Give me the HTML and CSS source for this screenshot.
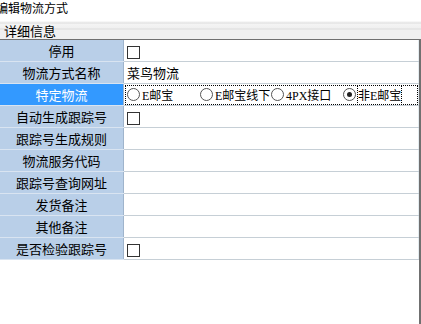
FILE: index.html
```html
<!DOCTYPE html>
<html lang="zh-CN">
<head>
<meta charset="UTF-8" />
<title>编辑物流方式</title>
<link rel="stylesheet" href="styles.css">
</head>
<body>
<div class="window">
  <div class="title">编辑物流方式</div>
  <div class="group-head">详细信息</div>
  <div class="panel">
    <table class="props">
      <tr><td class="label">停用</td><td class="value"><span class="check"></span></td></tr>
      <tr><td class="label">物流方式名称</td><td class="value">菜鸟物流</td></tr>
      <tr class="selected">
        <td class="label">特定物流</td>
        <td class="value">
          <div class="radios">
            <span class="radio-item w1"><span class="radio"></span>E邮宝</span>
            <span class="radio-item w2"><span class="radio"></span>E邮宝线下</span>
            <span class="radio-item w3"><span class="radio"></span>4PX接口</span>
            <span class="radio-item"><span class="radio on"></span><span class="focus">非E邮宝</span></span>
          </div>
        </td>
      </tr>
      <tr><td class="label">自动生成跟踪号</td><td class="value"><span class="check"></span></td></tr>
      <tr><td class="label">跟踪号生成规则</td><td class="value"></td></tr>
      <tr><td class="label">物流服务代码</td><td class="value"></td></tr>
      <tr><td class="label">跟踪号查询网址</td><td class="value"></td></tr>
      <tr><td class="label">发货备注</td><td class="value"></td></tr>
      <tr><td class="label">其他备注</td><td class="value"></td></tr>
      <tr><td class="label">是否检验跟踪号</td><td class="value"><span class="check"></span></td></tr>
    </table>
  </div>
</div>
</body>
</html>
```

FILE: styles.css
```css
html, body {
  margin: 0;
  height: 100%;
  background: #ffffff;
}
body {
  font-family: "Noto Sans CJK SC", "Noto Sans", sans-serif;
  font-size: 12px;
  color: #000;
  overflow: hidden;
}
.window {
  display: flex;
  flex-direction: column;
  height: 100%;
}
.title {
  height: 21px;
  line-height: 16px;
  margin-left: -4px;
  font-size: 12px;
}
.group-head {
  height: 18px;
  line-height: 20px;
  padding-left: 4px;
  font-size: 13px;
  background: linear-gradient(#f7f7f7 0, #f7f7f7 1px, #dcdcdc 2px, #f4f4f4 3px, #f0f0f0 7px, #dcdcdc 8px, #f0f0f0 9px);
  border-bottom: 1px solid #707070;
}
.panel {
  flex: 1;
  border-right: 2px solid #707070;
  margin-right: 0;
}
.props {
  border-collapse: collapse;
  width: 100%;
  table-layout: fixed;
}
.props td {
  height: 21px;
  padding: 0;
  border-bottom: 1px solid #c6cfd6;
}
.label {
  width: 123px;
  background: #b9cfe8;
  text-align: center;
  font-size: 13px;
  border-right: 1px solid #9fb4cc;
  border-bottom-color: #d9e4f1 !important;
}
.value {
  padding-left: 3px !important;
  font-size: 13px;
  border-right: 1px solid #e4ecf0;
}
.selected .label {
  background: #3399ff;
  color: #fff;
}
.selected .value {
  outline: 1px dotted #000;
  outline-offset: -2px;
}
.check {
  display: inline-block;
  width: 11px;
  height: 11px;
  border: 1px solid #333;
  background: #fff;
  vertical-align: middle;
  margin-left: 0;
}
.radios {
  display: flex;
  align-items: center;
  font-family: "Liberation Serif", "Noto Sans CJK SC", serif;
  font-size: 12px;
}
.radio-item {
  display: flex;
  align-items: center;
}
.w1 { width: 73px; }
.w2 { width: 71px; }
.w3 { width: 72px; }
.radio {
  display: inline-block;
  width: 11px;
  height: 11px;
  border: 1px solid #555;
  border-radius: 50%;
  margin-right: 2px;
  position: relative;
  background: #fff;
}
.radio.on::after {
  content: "";
  position: absolute;
  left: 3px;
  top: 3px;
  width: 5px;
  height: 5px;
  border-radius: 50%;
  background: #222;
}
.focus {
  outline: 1px dotted #000;
}
```
